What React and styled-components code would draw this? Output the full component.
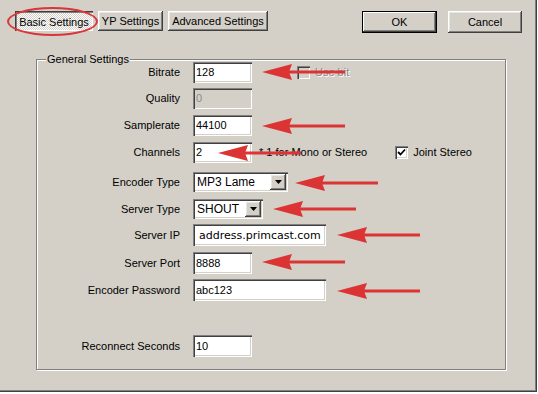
import React from 'react';
import styled, { createGlobalStyle, css } from 'styled-components';

const GlobalStyle = createGlobalStyle`
  html, body {
    margin: 0;
    padding: 0;
    background: #ffffff;
  }
  body {
    font-family: 'Liberation Sans', Arial, sans-serif;
    font-size: 11px;
    color: #000;
  }
`;

const raised = css`
  box-shadow: inset -1px -1px 0 #404040, inset 1px 1px 0 #ffffff,
    inset -2px -2px 0 #808080, inset 2px 2px 0 #e8e6e0;
`;

const sunken = css`
  box-shadow: inset 1px 1px 0 #808080, inset 2px 2px 0 #404040,
    inset -1px -1px 0 #ffffff, inset -2px -2px 0 #d4d0c8;
`;

const Dialog = styled.div`
  position: relative;
  width: 537px;
  height: 392px;
  box-sizing: border-box;
  padding-top: 11px;
  background: #d4d0c8;
  box-shadow: inset -1px -1px 0 #404040, inset -2px -2px 0 #808080;
`;

const Toolbar = styled.div`
  display: flex;
  align-items: flex-start;
  padding: 0 15px 0 15px;
`;

const TabButton = styled.button`
  height: 20px;
  width: ${(p) => p.$w}px;
  margin-right: 5px;
  padding: 0;
  border: none;
  font-family: 'Liberation Sans', Arial, sans-serif;
  font-size: 11px;
  color: #000;
  background: #d4d0c8;
  ${raised}
  ${(p) =>
    p.$active &&
    css`
      background: repeating-conic-gradient(#ffffff 0 25%, #d4d0c8 0 50%) 0 0 / 2px 2px;
      box-shadow: inset 1px 1px 0 #404040, inset 2px 2px 0 #808080,
        inset -1px -1px 0 #ffffff;
      padding-top: 1px;
    `}
`;

const DialogButton = styled.button`
  height: 22px;
  width: ${(p) => p.$w}px;
  margin-left: ${(p) => p.$ml || 0};
  padding: 0;
  border: none;
  font-family: 'Liberation Sans', Arial, sans-serif;
  font-size: 11px;
  color: #000;
  background: #d4d0c8;
  ${raised}
  ${(p) =>
    p.$default &&
    css`
      box-shadow: inset 0 0 0 1px #000, inset -2px -2px 0 #404040,
        inset 2px 2px 0 #ffffff, inset -3px -3px 0 #808080;
    `}
`;

const GroupBox = styled.div`
  position: relative;
  box-sizing: border-box;
  width: 470px;
  height: 311px;
  margin: 26px 0 0 36px;
  padding-top: 1px;
  border: 1px solid #808080;
  box-shadow: inset 1px 1px 0 #ffffff, 1px 1px 0 #ffffff;
`;

const Caption = styled.span`
  position: absolute;
  top: -8px;
  left: 9px;
  padding: 0 1px;
  background: #d4d0c8;
  line-height: 14px;
`;

const Row = styled.div`
  display: flex;
  align-items: center;
  height: 22px;
  margin-top: ${(p) => p.$mt || 0}px;
`;

const Label = styled.label`
  width: 143px;
  margin-right: 13px;
  text-align: right;
`;

const TextField = styled.input`
  box-sizing: border-box;
  width: ${(p) => p.$w}px;
  height: ${(p) => p.$h || 21}px;
  margin: 0;
  padding: 0 0 0 ${(p) => (p.$wide ? 6 : 3)}px;
  border: none;
  outline: none;
  background: ${(p) => (p.disabled ? '#d4d0c8' : '#ffffff')};
  color: ${(p) => (p.disabled ? '#8a8a8a' : '#000')};
  font-family: ${(p) =>
    p.$wide ? "'DejaVu Sans', Verdana, sans-serif" : "'Liberation Sans', Arial, sans-serif"};
  font-size: 11px;
  ${sunken}
`;

const Select = styled.div`
  box-sizing: border-box;
  display: flex;
  align-items: center;
  width: ${(p) => p.$w}px;
  height: 20px;
  padding: 2px 2px 2px 4px;
  background: #ffffff;
  font-size: 12px;
  ${sunken}
`;

const SelectText = styled.span`
  flex: 1;
`;

const DropButton = styled.span`
  display: flex;
  align-items: center;
  justify-content: center;
  width: 16px;
  height: 16px;
  background: #d4d0c8;
  ${raised}
`;

const Note = styled.span`
  margin-left: ${(p) => p.$ml}px;
  color: ${(p) => (p.$disabled ? '#8a8a8a' : '#000')};
  text-shadow: ${(p) => (p.$disabled ? '1px 1px 0 #ffffff' : 'none')};
`;

const CheckBox = styled.span`
  display: inline-flex;
  align-items: center;
  justify-content: center;
  box-sizing: border-box;
  width: 13px;
  height: 13px;
  margin-left: ${(p) => p.$ml}px;
  background: ${(p) => (p.$disabled ? '#d4d0c8' : '#ffffff')};
  ${sunken}
`;

const Ellipse = styled.div`
  position: absolute;
  left: 7px;
  top: 7px;
  width: 91px;
  height: 29px;
  box-sizing: border-box;
  border: 2px solid #d8363a;
  border-radius: 50%;
  pointer-events: none;
`;

const ArrowMark = styled.svg`
  position: absolute;
  left: ${(p) => p.$x}px;
  top: ${(p) => p.$y - 8}px;
  pointer-events: none;
`;

const Arrow = ({ x, y }) => (
  <ArrowMark $x={x} $y={y} width="84" height="16" viewBox="0 0 84 16">
    <polygon points="0,8 30,0 27,8 30,16" fill="#dc3434" />
    <rect x="26" y="6.5" width="57" height="3" fill="#dc3434" />
  </ArrowMark>
);

const Check = () => (
  <svg width="9" height="9" viewBox="0 0 9 9">
    <path d="M1 4 L3.5 6.5 L8 1.5" stroke="#000" strokeWidth="1.8" fill="none" />
  </svg>
);

const DownTriangle = () => (
  <svg width="7" height="4" viewBox="0 0 7 4">
    <polygon points="0,0 7,0 3.5,4" fill="#000" />
  </svg>
);

const arrows = [
  [262, 72],
  [262, 126],
  [218, 153],
  [295, 183],
  [273, 209],
  [337, 235],
  [262, 262],
  [337, 291],
];

const App = () => {
  return (
    <>
      <GlobalStyle />
      <Dialog>
        <Toolbar>
          <TabButton $w={78} $active>
            Basic Settings
          </TabButton>
          <TabButton $w={65}>YP Settings</TabButton>
          <TabButton $w={100}>Advanced Settings</TabButton>
          <DialogButton $w={75} $ml="auto" $default>
            OK
          </DialogButton>
          <DialogButton $w={74} $ml="11px">
            Cancel
          </DialogButton>
        </Toolbar>

        <GroupBox>
          <Caption>General Settings</Caption>
          <Row>
            <Label>Bitrate</Label>
            <TextField $w={59} defaultValue="128" readOnly />
            <CheckBox $ml={45} $disabled />
            <Note $ml={5} $disabled>
              Use bit
            </Note>
          </Row>
          <Row $mt={4}>
            <Label>Quality</Label>
            <TextField $w={59} defaultValue="0" disabled />
          </Row>
          <Row $mt={5}>
            <Label>Samplerate</Label>
            <TextField $w={59} defaultValue="44100" readOnly />
          </Row>
          <Row $mt={5}>
            <Label>Channels</Label>
            <TextField $w={59} defaultValue="2" readOnly />
            <Note $ml={7}>* 1 for Mono or Stereo</Note>
            <CheckBox $ml={28}>
              <Check />
            </CheckBox>
            <Note $ml={5}>Joint Stereo</Note>
          </Row>
          <Row $mt={8}>
            <Label>Encoder Type</Label>
            <Select $w={95}>
              <SelectText>MP3 Lame</SelectText>
              <DropButton>
                <DownTriangle />
              </DropButton>
            </Select>
          </Row>
          <Row $mt={5}>
            <Label>Server Type</Label>
            <Select $w={70}>
              <SelectText>SHOUT</SelectText>
              <DropButton>
                <DownTriangle />
              </DropButton>
            </Select>
          </Row>
          <Row $mt={4}>
            <Label>Server IP</Label>
            <TextField $w={133} $h={22} $wide defaultValue="address.primcast.com" readOnly />
          </Row>
          <Row $mt={6}>
            <Label>Server Port</Label>
            <TextField $w={59} $h={22} defaultValue="8888" readOnly />
          </Row>
          <Row $mt={5}>
            <Label>Encoder Password</Label>
            <TextField $w={133} $h={22} defaultValue="abc123" readOnly />
          </Row>
          <Row $mt={34}>
            <Label>Reconnect Seconds</Label>
            <TextField $w={59} $h={22} defaultValue="10" readOnly />
          </Row>
        </GroupBox>

        <Ellipse />
        {arrows.map(([x, y]) => (
          <Arrow key={`${x}-${y}`} x={x} y={y} />
        ))}
      </Dialog>
    </>
  );
};

export default App;
